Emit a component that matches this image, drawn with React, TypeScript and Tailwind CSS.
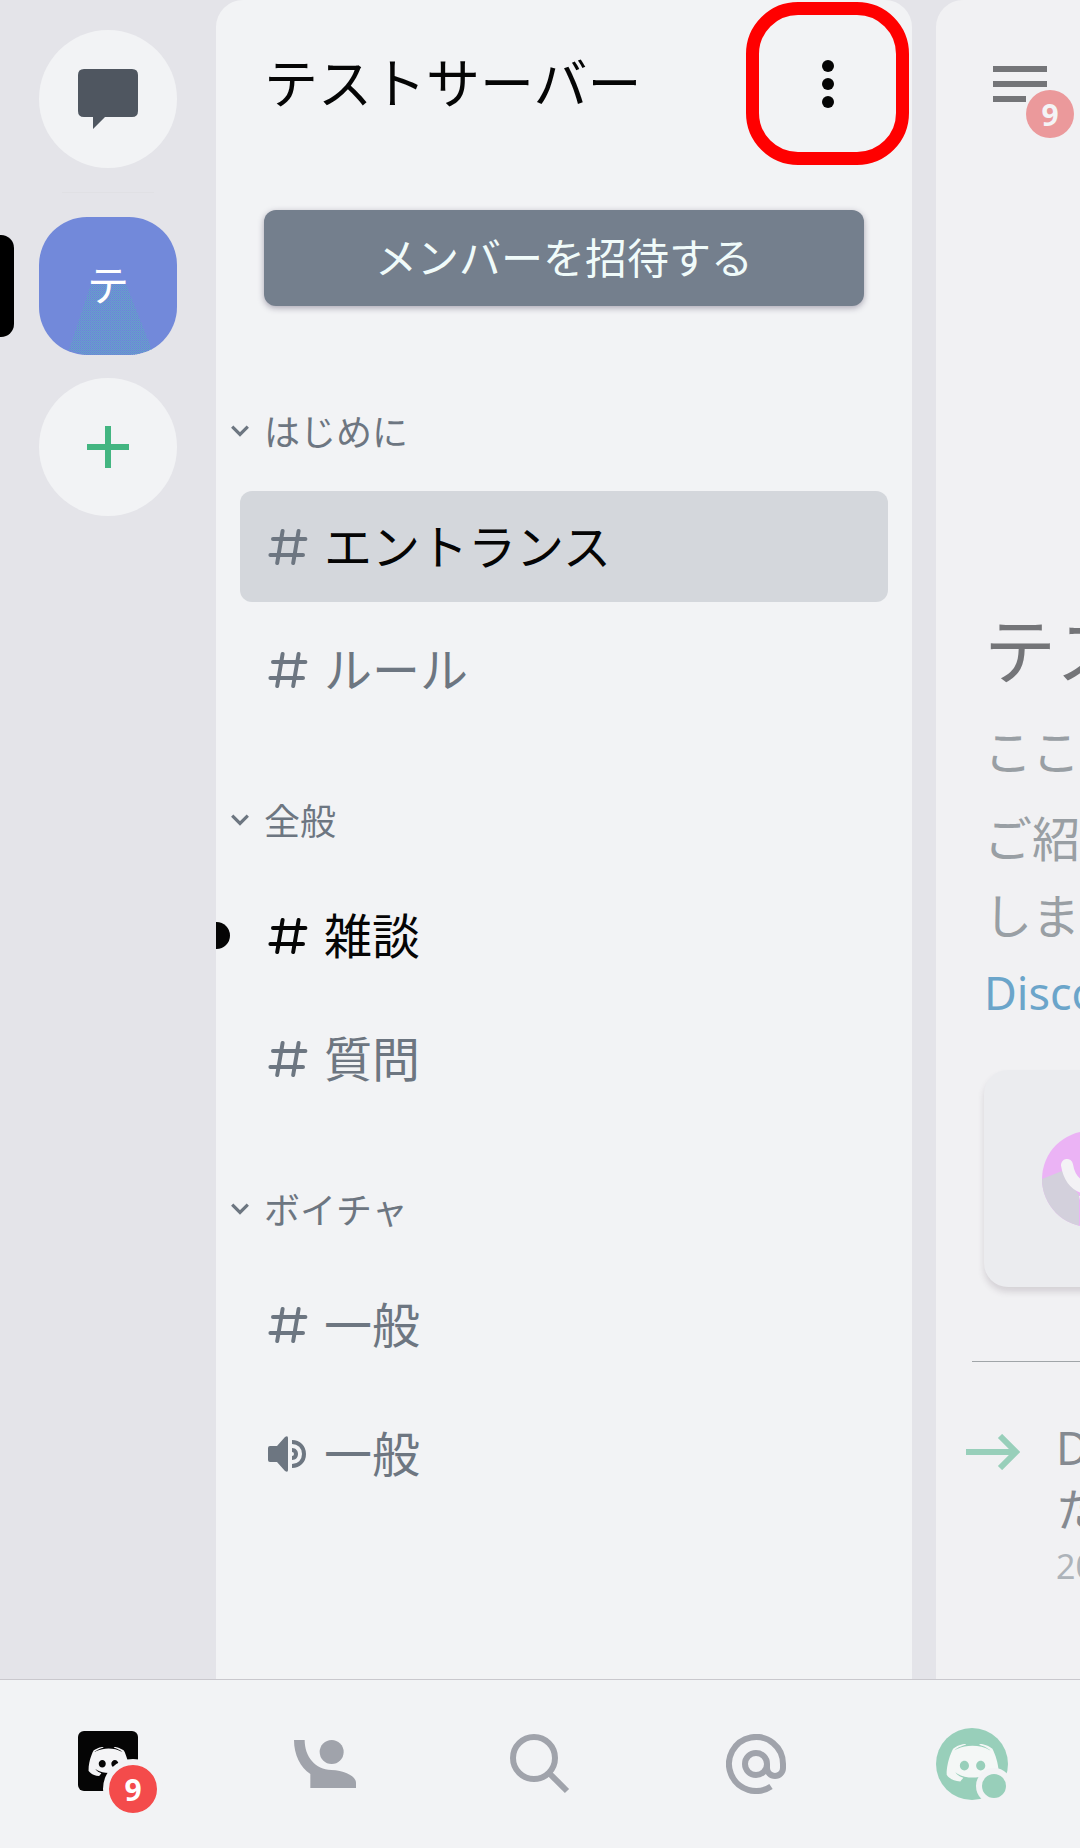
const FACE =
  "M375.04 295.424c0-82.432-36.864-149.248-36.864-149.248-36.864-27.648-71.936-26.88-71.936-26.88l-3.584 4.096c43.52 13.312 63.744 32.512 63.744 32.512-60.811-33.329-132.244-33.335-191.232-7.424-9.472 4.352-15.104 7.424-15.104 7.424s21.248-20.224 67.328-33.536l-2.56-3.072s-35.072-.768-71.936 26.88c0 0-36.864 66.816-36.864 149.248 0 0 21.504 37.12 78.08 38.912 0 0 9.472-11.52 17.152-21.248-32.512-9.728-44.8-30.208-44.8-30.208 3.766 2.636 9.976 6.053 10.496 6.4 43.21 24.198 104.588 32.126 159.744 8.96 8.96-3.328 18.944-8.192 29.44-15.104 0 0-12.8 20.992-46.336 30.464 7.68 9.728 16.896 20.736 16.896 20.736 56.576-1.792 78.336-38.912 78.336-38.912zM297.216 243.2c0 15.616-11.52 28.416-26.112 28.416-14.336 0-26.112-12.8-26.112-28.416s11.52-28.416 26.112-28.416c14.592 0 26.112 12.8 26.112 28.416zm-119.552-28.416c-14.592 0-26.112 12.8-26.112 28.416s11.776 28.416 26.112 28.416c14.592 0 26.112-12.8 26.112-28.416.256-15.616-11.52-28.416-26.112-28.416z";

function Face({ className }: { className: string }) {
  return (
    <svg viewBox="72.96 119.3 302.08 215.04" className={className} fill="currentColor">
      <path d={FACE} fillRule="evenodd" />
    </svg>
  );
}

function Hash() {
  return (
    <svg viewBox="0 0 40 36" className="h-9 w-10 shrink-0" fill="none" stroke="currentColor" strokeWidth="4" strokeLinecap="round">
      <path d="M14.6 2 9.2 34M30.6 2 25.2 34M5 10H37.4M2.4 26H35" />
    </svg>
  );
}

function Speaker() {
  return (
    <svg viewBox="0 0 40 36" className="h-9 w-10 shrink-0" fill="none">
      <path d="M2 10h7L17 1q3-2 3 1v32q0 3-3 1L9 26H2q-2 0-2-2V12q0-2 2-2z" fill="currentColor" />
      <path d="M24 6c7 0 12 5 12 12s-5 12-12 12" stroke="currentColor" strokeWidth="4" />
      <path d="M24 12c4 0 6 3 6 6s-2 6-6 6v-4q2 0 2-2t-2-2z" fill="currentColor" />
    </svg>
  );
}

function Category({ name }: { name: string }) {
  return (
    <div className="flex h-[52px] items-center text-[36px] leading-[52px] text-[#6d7681]">
      <svg viewBox="0 0 18 12" className="mr-[15px] ml-[15px] h-3 w-[18px]" fill="none" stroke="currentColor" strokeWidth="3.2">
        <path d="m1.2 1.6 7.8 7.8 7.8-7.8" />
      </svg>
      <span className="pb-[3px]">{name}</span>
    </div>
  );
}

type Kind = "read" | "active" | "unread" | "voice";

const ROW: Record<Kind, string> = {
  read: "text-[#6d7681]",
  voice: "text-[#6d7681]",
  active: "bg-[#d4d7dc] text-[#6d7681]",
  unread: "text-[#050505]",
};

function Channel({ name, kind = "read" }: { name: string; kind?: Kind }) {
  return (
    <div className={`relative mx-6 flex h-[111px] items-center rounded-xl pl-7 text-[48px] ${ROW[kind]}`}>
      {kind === "unread" && <span className="absolute top-[42px] -left-6 h-[27px] w-[14px] rounded-r-full bg-[#050505]" />}
      {kind === "voice" ? <Speaker /> : <Hash />}
      <span className={kind === "active" ? "ml-4 pb-[6px] text-[#050505]" : "ml-4 pb-[6px]"}>{name}</span>
    </div>
  );
}

function Rail() {
  return (
    <aside className="relative flex w-[216px] shrink-0 flex-col items-center pt-[30px]">
      <div className="flex h-[138px] w-[138px] justify-center rounded-full bg-[#f2f3f5] pt-[39px]">
        <svg viewBox="0 0 60 60" className="h-[60px] w-[60px]" fill="#4f5660">
          <path d="M6 0h48q6 0 6 6v36q0 6-6 6H27L15 60V48H6q-6 0-6-6V6q0-6 6-6z" />
        </svg>
      </div>
      <div className="mt-6 h-px w-[92px] bg-[#e0e0e4]" />
      <div className="relative mt-6 flex h-[138px] w-[138px] items-center justify-center overflow-hidden rounded-[48px] bg-[#7289da]">
        <svg viewBox="0 0 138 138" className="absolute inset-0 h-full w-full">
          <defs>
            <pattern id="weave" width="2" height="2" patternUnits="userSpaceOnUse">
              <rect width="1" height="1" fill="#5ba8c0" />
              <rect x="1" y="1" width="1" height="1" fill="#6592cf" />
            </pattern>
          </defs>
          <path d="M52 67h35l26 66-16 5H46l-16-5z" fill="url(#weave)" />
        </svg>
        <span className="relative pb-[7px] text-[42px] leading-none text-white">テ</span>
      </div>
      <div className="mt-[23px] flex h-[138px] w-[138px] items-center justify-center rounded-full bg-[#f2f3f5]">
        <svg viewBox="0 0 42 42" className="h-[42px] w-[42px]" stroke="#43b581" strokeWidth="6">
          <path d="M21 0v42M0 21h42" />
        </svg>
      </div>
      <span className="absolute top-[235px] left-0 h-[102px] w-[14px] rounded-r-[13px] bg-black" />
    </aside>
  );
}

function ChannelPanel() {
  return (
    <main className="relative w-[696px] shrink-0 rounded-t-[27px] bg-[#f2f3f5]">
      <header className="flex h-[168px] items-center justify-between pl-12">
        <h1 className="pb-[6px] text-[54px] leading-[80px] text-[#050505]">テストサーバー</h1>
        <svg viewBox="0 0 12 48" className="mr-[78px] h-12 w-3" fill="#050505">
          <circle cx="6" cy="6" r="6" />
          <circle cx="6" cy="24" r="6" />
          <circle cx="6" cy="42" r="6" />
        </svg>
      </header>
      <span className="absolute top-[2px] left-[530px] h-[163px] w-[163px] rounded-[52px] border-[13px] border-[#ff0000]" />
      <button className="mt-[42px] ml-12 flex h-24 w-[600px] items-center justify-center rounded-xl bg-[#747f8d] pb-[6px] text-[42px] text-[#f0fbfa] shadow-[0_2px_6px_rgba(60,50,80,0.4)]">
        メンバーを招待する
      </button>
      <section className="mt-[99px]">
        <Category name="はじめに" />
        <div className="mt-[34px] flex flex-col gap-3">
          <Channel name="エントランス" kind="active" />
          <Channel name="ルール" />
        </div>
      </section>
      <section className="mt-[69px]">
        <Category name="全般" />
        <div className="mt-[34px] flex flex-col gap-3">
          <Channel name="雑談" kind="unread" />
          <Channel name="質問" />
        </div>
      </section>
      <section className="mt-[69px]">
        <Category name="ボイチャ" />
        <div className="mt-[34px] flex flex-col gap-[18px]">
          <Channel name="一般" />
          <Channel name="一般" kind="voice" />
        </div>
      </section>
    </main>
  );
}

function ChatPeek() {
  return (
    <section className="ml-6 w-[144px] shrink-0 overflow-hidden rounded-tl-[27px] bg-[#f1f1f3] whitespace-nowrap">
      <div className="relative ml-[57px] flex h-[102px] flex-col justify-end gap-[9px]">
        <span className="h-[6px] w-[54px] bg-[#747578]" />
        <span className="h-[6px] w-[54px] bg-[#747578]" />
        <span className="h-[6px] w-[33px] bg-[#747578]" />
        <span className="absolute top-[90px] left-[33px] flex h-12 w-12 items-center justify-center rounded-full bg-[#eb999b] font-['Noto_Sans'] text-[30px] font-bold text-[#f4f4f6]">
          9
        </span>
      </div>
      <div className="ml-12">
        <h2 className="mt-[492px] h-[106px] text-[72px] leading-[106px] text-[#747578]">テスト</h2>
        <p className="mt-[14px] h-[70px] text-[48px] leading-[70px] text-[#999fa4]">ここ</p>
        <p className="mt-[14px] text-[48px] leading-[77px] text-[#999fa4]">
          ご紹
          <br />
          しま
        </p>
        <p className="mt-[2px] h-[77px] font-['Noto_Sans'] text-[45px] leading-[77px] text-[#6ba5ca]">Discord</p>
        <div className="mt-[39px] h-[217px] w-[200px] rounded-3xl bg-[#ebecef] pt-[61px] pl-[58px] shadow-[0_5px_6px_rgba(80,60,80,0.17)]">
          <svg viewBox="0 0 96 96" className="h-24 w-24">
            <clipPath id="disc">
              <circle cx="48" cy="48" r="48" />
            </clipPath>
            <g clipPath="url(#disc)">
              <path d="M0 0h96v96H0z" fill="#ebb3f5" />
              <path d="M0 48 20 40l17 24v36H0z" fill="#d3d0dc" />
              <path d="M25 34c2 12 8 20 18 23l12 2" fill="none" stroke="#f3f2f5" strokeWidth="12" strokeLinecap="round" />
              <path d="M37 65h10v8h-8z" fill="#f3f2f5" />
            </g>
          </svg>
        </div>
      </div>
      <div className="mt-[74px] ml-9 h-px bg-[#a0a5a8]" />
      <div className="mt-[56px] ml-[30px] flex">
        <svg viewBox="0 0 54 36" className="mt-4 h-9 w-[54px] shrink-0" fill="none" stroke="#98cfba" strokeWidth="6">
          <path d="M0 18h50M34 2l16 16-16 16" />
        </svg>
        <div className="ml-[36px] text-[45px] leading-[60px] text-[#858a91]">
          <p className="h-[60px] font-['Noto_Sans']">Discord</p>
          <p className="h-[61px]">ため</p>
          <p className="h-[54px] font-['Noto_Sans'] text-[34px] leading-[54px] text-[#adb3b9]">2021</p>
        </div>
      </div>
    </section>
  );
}

function BottomNav() {
  return (
    <nav className="grid h-[169px] shrink-0 grid-cols-5 border-t border-[#c9c8cd] bg-[#f2f3f5] text-[#a0a3ab]">
      <div className="flex justify-center pt-[51px]">
        <div className="relative flex h-[60px] w-[60px] justify-center rounded-[6px] bg-[#050505] pt-4">
          <Face className="h-[29px] w-[41px] text-[#f4f4f6]" />
          <span className="absolute top-[28px] left-[25px] flex h-[60px] w-[60px] items-center justify-center rounded-full border-[6px] border-[#f2f3f5] bg-[#f44b4b] font-['Noto_Sans'] text-[30px] font-bold text-white">
            9
          </span>
        </div>
      </div>
      <div className="flex justify-center pt-[60px]">
        <svg viewBox="882 240 186 144" className="ml-px h-12 w-[62px]" fill="currentColor">
          <path d="M882 240h32c0 50 32 89 80 90 42 1 74 20 74 38v16H931v-42c-30-20-49-58-49-102z" />
          <circle cx="995" cy="276" r="36" />
        </svg>
      </div>
      <div className="flex justify-center pt-[54px]">
        <svg viewBox="0 0 60 60" className="h-[60px] w-[60px]" fill="none" stroke="currentColor" strokeWidth="6">
          <circle cx="24" cy="24" r="21" />
          <path d="m39 39 18 18" />
        </svg>
      </div>
      <div className="flex justify-center pt-[54px]">
        <svg viewBox="0 0 60 60" className="h-[60px] w-[60px]" fill="none" stroke="currentColor" strokeWidth="6">
          <circle cx="30" cy="30" r="11" />
          <path d="M41 30v4a8 8 0 0 0 16 0v-4A27 27 0 1 0 45 52.4" />
        </svg>
      </div>
      <div className="flex justify-center pt-12">
        <div className="relative h-[72px] w-[72px] rounded-full bg-[#98cfba] pt-4 pl-[9.5px]">
          <Face className="h-[37.5px] w-[53px] text-[#f4f7f6]" />
          <span className="absolute top-[40px] left-[40px] h-9 w-9 rounded-full border-[6px] border-[#f2f3f5] bg-[#98cfba]" />
        </div>
      </div>
    </nav>
  );
}

export default function App() {
  return (
    <div lang="ja" className="flex h-[1848px] w-[1080px] flex-col overflow-hidden bg-[#e4e4e9] font-['Noto_Sans_CJK_JP',sans-serif]">
      <div className="flex h-[1679px] shrink-0 overflow-hidden">
        <Rail />
        <ChannelPanel />
        <ChatPeek />
      </div>
      <BottomNav />
    </div>
  );
}
